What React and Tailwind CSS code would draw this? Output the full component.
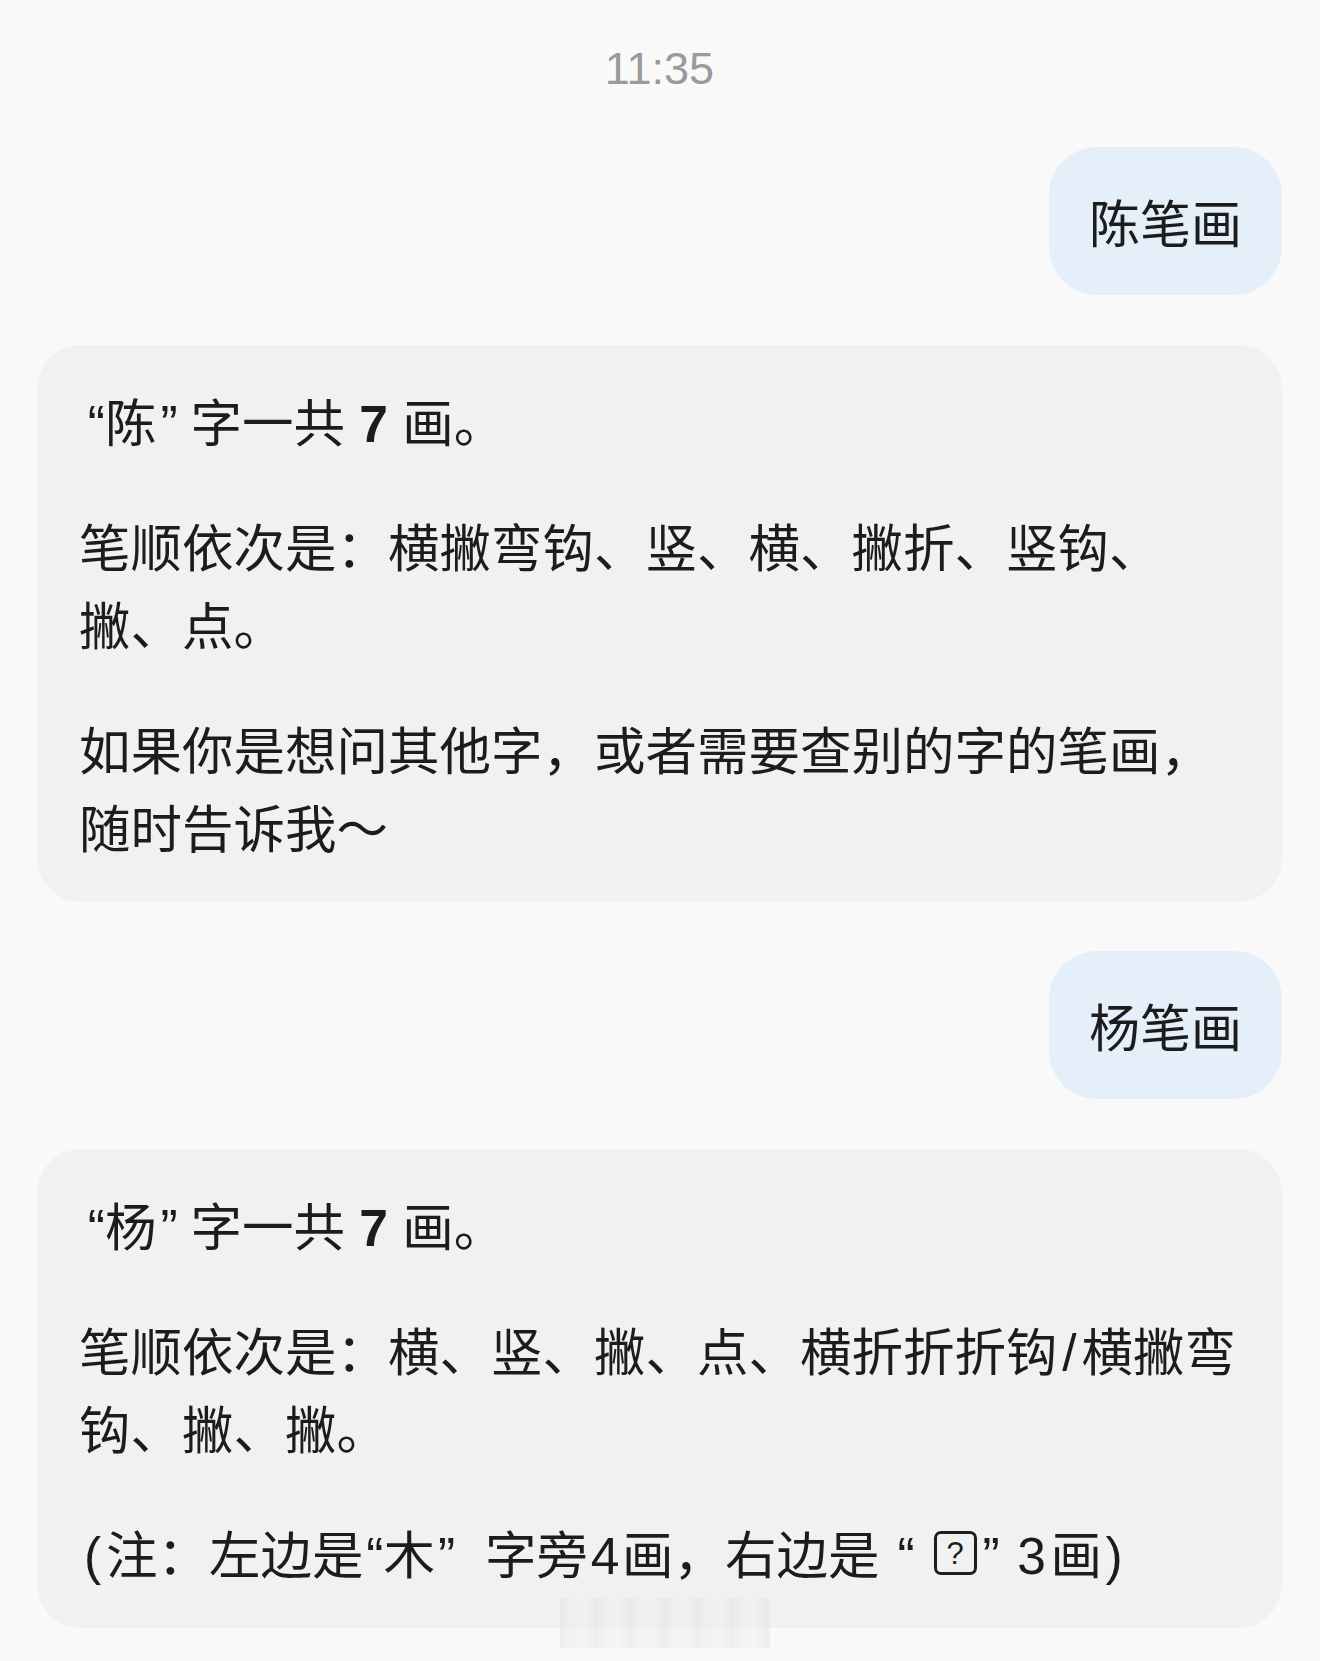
import React from "react";

const cjk = "font-['Noto_Sans_CJK_SC','Noto_Sans',sans-serif]";

function Q({ className, children }) {
  return (
    <span className={`inline-block leading-none font-['Liberation_Sans',sans-serif] ${className}`}>
      {children}
    </span>
  );
}

function Tofu() {
  return (
    <span className="ml-[4px] inline-flex h-[44px] w-[43px] -translate-y-[7px] items-center justify-center rounded-[7px] border-[3px] border-[#1e1e1e] align-middle font-['Liberation_Sans',sans-serif] text-[31px] font-medium leading-none">
      ?
    </span>
  );
}

function UserBubble({ text }) {
  return (
    <div className="self-end rounded-[48px] bg-[#e4eff9] px-[40px] py-[35px]">
      <div className={`${cjk} whitespace-nowrap text-[51px] leading-[78px] text-[#1c1c1c]`}>{text}</div>
    </div>
  );
}

function AssistantBubble({ paragraphs }) {
  return (
    <div className="w-full rounded-[44px] bg-[#f1f1f1] pb-[37px] pl-[42px] pr-[40px] pt-[36px]">
      <div className={`${cjk} flex flex-col gap-[47px] text-[51.5px] leading-[78px] text-[#1c1c1c]`}>
        {paragraphs.map((lines, i) => (
          <div key={i}>
            {lines.map((line, j) => (
              <div key={j} className="whitespace-nowrap">
                {line}
              </div>
            ))}
          </div>
        ))}
      </div>
    </div>
  );
}

function CountLine({ ch }) {
  return (
    <>
      <Q className="w-[26px] text-right">“</Q>
      {ch}
      <Q className="w-[34px] pl-[4px]">”</Q>
      字一共
      <span className="font-['Liberation_Sans',sans-serif] font-semibold leading-none"> 7 </span>
      画。
    </>
  );
}

export default function App() {
  const chen = [
    [<CountLine ch="陈" />],
    ["笔顺依次是：横撇弯钩、竖、横、撇折、竖钩、", "撇、点。"],
    ["如果你是想问其他字，或者需要查别的字的笔画，", "随时告诉我～"],
  ];

  const yang = [
    [<CountLine ch="杨" />],
    [
      <>
        笔顺依次是：横、竖、撇、点、横折折折钩
        <Q className="w-[24px] text-center">/</Q>
        横撇弯
      </>,
      "钩、撇、撇。",
    ],
    [
      <>
        <Q className="w-[27px] text-center">(</Q>
        注：左边是
        <Q className="w-[20px] text-right">“</Q>
        木
        <Q className="w-[50px] pl-[3px]">”</Q>
        字旁
        <Q className="w-[34px] text-center">4</Q>
        画，右边是
        <Q className="w-[50px] pr-[15px] text-right">“</Q>
        <Tofu />
        <Q className="w-[36px] pl-[6px]">”</Q>
        <Q className="w-[38px] text-center">3</Q>
        画
        <Q className="w-[24px] text-center">)</Q>
      </>,
    ],
  ];

  return (
    <div className="relative min-h-[1661px] w-full bg-[#f9f9f9] pl-[37px] pr-[38px] pt-[39px]">
      <div className="flex flex-col">
        <div className="h-[60px] text-center font-['Liberation_Sans',sans-serif] text-[45px] leading-[60px] text-[#9a9a9a]">
          11:35
        </div>

        <div className="mt-[48px] flex flex-col">
          <UserBubble text="陈笔画" />
        </div>

        <div className="mt-[50px]">
          <AssistantBubble paragraphs={chen} />
        </div>

        <div className="mt-[49px] flex flex-col">
          <UserBubble text="杨笔画" />
        </div>

        <div className="mt-[50px]">
          <AssistantBubble paragraphs={yang} />
        </div>
      </div>

      {/* faint scan streak over the bottom edge */}
      <div className="absolute left-[560px] top-[1598px] h-[50px] w-[210px] bg-[repeating-linear-gradient(90deg,#e0e0e0_0px,#ebebeb_10px,#f1f1f1_22px,#e6e6e6_34px)] opacity-50" />
    </div>
  );
}
